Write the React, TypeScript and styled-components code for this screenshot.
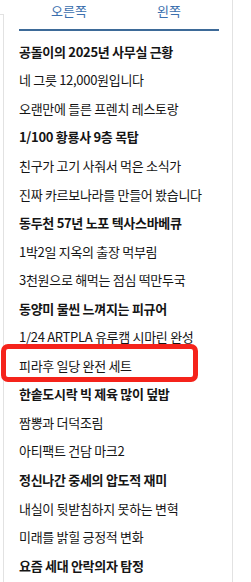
import React from 'react';
import styled, { createGlobalStyle } from 'styled-components';

const GlobalStyle = createGlobalStyle`
    html, body {
        margin: 0;
        padding: 0;
        background: #ffffff;
    }
    body {
        font-family: "Noto Sans CJK KR", "Noto Sans", sans-serif;
    }
`;

const items = [
    { text: '공돌이의 2025년 사무실 근황', bold: true },
    { text: '네 그릇 12,000원입니다' },
    { text: '오랜만에 들른 프렌치 레스토랑' },
    { text: '1/100 황룡사 9층 목탑', bold: true },
    { text: '친구가 고기 사줘서 먹은 소식가' },
    { text: '진짜 카르보나라를 만들어 봤습니다' },
    { text: '동두천 57년 노포 텍사스바베큐', bold: true },
    { text: '1박2일 지옥의 출장 먹부림' },
    { text: '3천원으로 해먹는 점심 떡만두국' },
    { text: '동양미 물씬 느껴지는 피규어', bold: true },
    { text: '1/24 ARTPLA 유루캠 시마린 완성' },
    { text: '피라후 일당 완전 세트', marked: true },
    { text: '한솥도시락 빅 제육 많이 덮밥', bold: true },
    { text: '짬뽕과 더덕조림' },
    { text: '아티팩트 건담 마크2' },
    { text: '정신나간 중세의 압도적 재미', bold: true },
    { text: '내실이 뒷받침하지 못하는 변혁' },
    { text: '미래를 밝힐 긍정적 변화' },
    { text: '요즘 세대 안락의자 탐정', bold: true },
];

function App() {
    return (
        <>
            <GlobalStyle />
            <Panel>
                <TabBar>
                    <Tab>오른쪽</Tab>
                    <Tab>왼쪽</Tab>
                </TabBar>
                <List>
                    {items.map((item) => (
                        <Item key={item.text} $bold={item.bold}>
                            {item.text}
                            {item.marked && <Mark />}
                        </Item>
                    ))}
                </List>
            </Panel>
        </>
    );
}

const Panel = styled.div`
    position: relative;
    margin-left: 3px;
    width: 230px;
    min-height: 582px;
    border-right: 1px solid #e2e2e2;
    box-sizing: border-box;

    &::before {
        content: "";
        position: absolute;
        left: 0;
        top: 14px;
        bottom: 0;
        width: 1px;
        background: #e2e2e2;
    }

    &::after {
        content: "";
        position: absolute;
        left: -3px;
        top: 14px;
        width: 3px;
        height: 1px;
        background: #e2e2e2;
    }
`;

const TabBar = styled.div`
    display: grid;
    grid-template-columns: 1fr 1fr;
    margin-left: 16px;
    width: 200px;
    height: 29px;
    border-bottom: 2px solid #3d6a98;
`;

const Tab = styled.div`
    display: flex;
    justify-content: center;
    align-items: flex-start;
    padding-top: 2px;
    font-size: 13px;
    line-height: 18px;
    color: #3b6fae;
`;

const List = styled.ul`
    list-style: none;
    margin: 0;
    padding: 6px 0 0 16px;
`;

const Item = styled.li<{ $bold?: boolean }>`
    position: relative;
    height: 28.55px;
    display: flex;
    align-items: center;
    font-size: 13px;
    letter-spacing: -0.3px;
    color: #151515;
    font-weight: ${(p) => (p.$bold ? 700 : 400)};
    white-space: nowrap;
`;

const Mark = styled.span`
    position: absolute;
    left: -18px;
    width: 197px;
    top: -7px;
    bottom: -2px;
    box-sizing: border-box;
    border: 5px solid #f5231b;
    border-radius: 7px;
    pointer-events: none;
`;

export default App;
